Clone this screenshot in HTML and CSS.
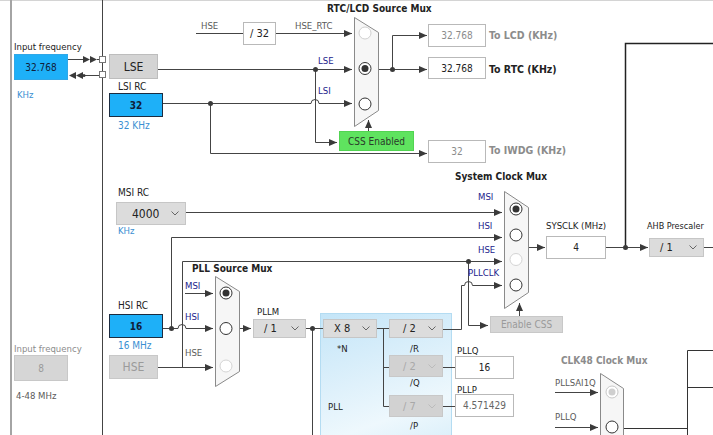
FILE: index.html
```html
<!DOCTYPE html>
<html>
<head>
<meta charset="utf-8">
<link rel="stylesheet" href="styles.css">
</head>
<body>
<div class="canvas">
<div class="pll-area"></div>
<svg class="wires" width="713" height="435" viewBox="0 0 713 435">
  <defs>
    <marker id="a" viewBox="0 0 8 8" refX="8" refY="4" markerWidth="8" markerHeight="8" markerUnits="userSpaceOnUse" orient="auto">
      <path d="M0,0.5 L8,4 L0,7.5z" fill="#3a3a3a"/>
    </marker>
  </defs>
  <line x1="0" y1="0.5" x2="713" y2="0.5" stroke="#d4d4d4"/>
  <rect x="10" y="0" width="2" height="435" fill="#a4a4a4"/>
  <g fill="none" stroke="#444" stroke-width="1">
    <path d="M102.5 0 V435"/>
    <path d="M68 59.5 H83 M97 59.5 H100"/>
    <path d="M84 75.5 H100"/>
    <path d="M158 69.5 H352" marker-end="url(#a)"/>
    <path d="M163 103.5 H311 A4 4 0 0 1 319 103.5 H352" marker-end="url(#a)"/>
    <path d="M210.5 103.5 V153.5 H427" marker-end="url(#a)"/>
    <path d="M315.5 69.5 V142.5 H337" marker-end="url(#a)"/>
    <path d="M196 33.5 H243"/>
    <path d="M276 33.5 H352" marker-end="url(#a)"/>
    <path d="M368.5 131 V120" marker-end="url(#a)"/>
    <path d="M378 69.5 H427" marker-end="url(#a)"/>
    <path d="M392.5 69.5 V35.5 H427" marker-end="url(#a)"/>
    <path d="M625.5 247.5 V43.5 H713" stroke="#222" stroke-width="1.5"/>
    <path d="M186 212.5 H502" marker-end="url(#a)"/>
    <path d="M163 328.5 H178 A4 4 0 0 1 186 328.5 H213" marker-end="url(#a)"/>
    <path d="M171.5 328.5 V237.5 H502" marker-end="url(#a)"/>
    <path d="M158 367.5 H213" marker-end="url(#a)"/>
    <path d="M182.5 367.5 V261.5 H502" marker-end="url(#a)"/>
    <path d="M468.5 261.5 V325.5 H488" marker-end="url(#a)"/>
    <path d="M443 329.5 H461.5 V285.5 H464.5 A4 4 0 0 1 472.5 285.5 H502" marker-end="url(#a)"/>
    <path d="M185 293.5 H213" marker-end="url(#a)"/>
    <path d="M239 328.5 H251" marker-end="url(#a)"/>
    <path d="M306 328.5 H323 M312.5 328.5 V435"/>
    <path d="M377 328.5 H389 M383.5 328.5 V406.5 H389 M383.5 367.5 H389"/>
    <path d="M443 367.5 H455 M443 406.5 H455"/>
    <path d="M519.5 316 V303" marker-end="url(#a)"/>
    <path d="M528 247.5 H545" marker-end="url(#a)"/>
    <path d="M606 247.5 H648" marker-end="url(#a)"/>
    <path d="M704 247.5 H713"/>
    <path d="M555 392.5 H598" marker-end="url(#a)"/>
    <path d="M555 427.5 H598" marker-end="url(#a)"/>
    <path d="M623 428.5 H687.5 M687.5 435 V350.5 H713 M687.5 387.5 H713" stroke="#333"/>
  </g>
  <g fill="#3a3a3a">
    <polygon points="83,56 90,59.5 83,63"/>
    <polygon points="90,56 97,59.5 90,63"/>
    <polygon points="83,72 76,75.5 83,79"/>
    <polygon points="76,72 69,75.5 76,79"/>
    <circle cx="84" cy="75.5" r="1.5"/>
    <circle cx="315.5" cy="69.5" r="2.5"/>
    <circle cx="210.5" cy="103.5" r="2.5"/>
    <circle cx="392.5" cy="69.5" r="2.5"/>
    <circle cx="625.5" cy="247.5" r="2.5"/>
    <circle cx="171.5" cy="328.5" r="2.5"/>
    <circle cx="468.5" cy="261.5" r="2.5"/>
    <circle cx="312.5" cy="328.5" r="2.5"/>
  </g>
  <g fill="#fff" stroke="#777">
    <rect x="99.5" y="56.5" width="6" height="6"/>
    <rect x="99.5" y="71.5" width="6" height="6"/>
  </g>
  <g fill="#f6f6f6" stroke="#8a8a8a">
    <polygon points="354.5,17.5 378.5,32.5 378.5,110.5 354.5,126.5"/>
    <polygon points="504.5,191.5 528.5,207.5 528.5,292.5 504.5,308.5"/>
    <polygon points="215.5,276.5 239.5,291.5 239.5,371.5 215.5,386.5"/>
    <polygon points="600.5,373.5 623.5,388.5 623.5,460 600.5,470"/>
  </g>
  <g fill="#fff" stroke="#333" stroke-width="1">
    <circle cx="365" cy="33" r="6" stroke="#d0d0d0"/>
    <circle cx="365" cy="68.5" r="6"/>
    <circle cx="365" cy="104" r="6"/>
    <circle cx="516" cy="209" r="6"/>
    <circle cx="516" cy="235" r="6"/>
    <circle cx="516" cy="259.5" r="6" stroke="#d4d4d4"/>
    <circle cx="516" cy="285" r="6"/>
    <circle cx="226" cy="293" r="6"/>
    <circle cx="226" cy="328.5" r="6"/>
    <circle cx="226" cy="366" r="6" stroke="#d4d4d4"/>
    <circle cx="612" cy="392" r="6" stroke="#c8c8c8"/>
    <circle cx="612" cy="427" r="6"/>
  </g>
  <g fill="#333">
    <circle cx="365" cy="68.5" r="3.5"/>
    <circle cx="516" cy="209" r="3.5"/>
    <circle cx="226" cy="293" r="3.5"/>
    <circle cx="612" cy="392" r="3.5" fill="#cfcfcf"/>
  </g>
</svg>

<div class="node blue inbox b-in1">32.768</div>
<div class="node gray big b-lse">LSE</div>
<div class="node blue dark b-lsi">32</div>
<div class="node white b-div32">/ 32</div>
<div class="node white fade b-lcd">32.768</div>
<div class="node white b-rtc">32.768</div>
<div class="node white fade b-iwdg">32</div>
<div class="node green b-css">CSS Enabled</div>
<div class="node drop b-msi"><span>4000</span><svg class="chev" width="8" height="5" viewBox="0 0 8 5"><path d="M0.5 0.5 L4 4 L7.5 0.5" fill="none" stroke="#666"/></svg></div>
<div class="node blue dark b-hsi">16</div>
<div class="node gray big fade2 b-hse">HSE</div>
<div class="node gray fade2 b-in2">8</div>
<div class="node drop b-pllm"><span>/ 1</span><svg class="chev" width="8" height="5" viewBox="0 0 8 5"><path d="M0.5 0.5 L4 4 L7.5 0.5" fill="none" stroke="#666"/></svg></div>
<div class="node drop b-x8"><span>X 8</span><svg class="chev" width="8" height="5" viewBox="0 0 8 5"><path d="M0.5 0.5 L4 4 L7.5 0.5" fill="none" stroke="#666"/></svg></div>
<div class="node drop b-r"><span>/ 2</span><svg class="chev" width="8" height="5" viewBox="0 0 8 5"><path d="M0.5 0.5 L4 4 L7.5 0.5" fill="none" stroke="#666"/></svg></div>
<div class="node drop off b-q"><span>/ 2</span><svg class="chev" width="8" height="5" viewBox="0 0 8 5"><path d="M0.5 0.5 L4 4 L7.5 0.5" fill="none" stroke="#bbb"/></svg></div>
<div class="node drop off b-p"><span>/ 7</span><svg class="chev" width="8" height="5" viewBox="0 0 8 5"><path d="M0.5 0.5 L4 4 L7.5 0.5" fill="none" stroke="#bbb"/></svg></div>
<div class="node white b-pllq">16</div>
<div class="node white mid b-pllp">4.571429</div>
<div class="node gray fade2 b-ecss">Enable CSS</div>
<div class="node white b-sysclk">4</div>
<div class="node drop b-ahb"><span>/ 1</span><svg class="chev" width="8" height="5" viewBox="0 0 8 5"><path d="M0.5 0.5 L4 4 L7.5 0.5" fill="none" stroke="#666"/></svg></div>

<div class="lbl l-inf1">Input frequency</div>
<div class="lbl blue-t l-khz1">KHz</div>
<div class="lbl l-lsirc">LSI RC</div>
<div class="lbl blue-t l-k32">32 KHz</div>
<div class="lbl grey-t l-hse">HSE</div>
<div class="lbl grey-t l-hsertc">HSE_RTC</div>
<div class="lbl title l-rtc">RTC/LCD Source Mux</div>
<div class="lbl navy l-lse">LSE</div>
<div class="lbl navy l-lsi">LSI</div>
<div class="lbl out fade l-tolcd">To LCD (KHz)</div>
<div class="lbl out l-tortc">To RTC (KHz)</div>
<div class="lbl out fade l-toiwdg">To IWDG (KHz)</div>
<div class="lbl l-msirc">MSI RC</div>
<div class="lbl blue-t l-khz2">KHz</div>
<div class="lbl title l-sys">System Clock Mux</div>
<div class="lbl navy l-smsi">MSI</div>
<div class="lbl navy l-shsi">HSI</div>
<div class="lbl navy l-shse">HSE</div>
<div class="lbl navy l-spll">PLLCLK</div>
<div class="lbl l-sysclk">SYSCLK (MHz)</div>
<div class="lbl l-ahb">AHB Prescaler</div>
<div class="lbl title l-pll">PLL Source Mux</div>
<div class="lbl navy l-pmsi">MSI</div>
<div class="lbl navy l-phsi">HSI</div>
<div class="lbl grey-t l-phse">HSE</div>
<div class="lbl l-hsirc">HSI RC</div>
<div class="lbl blue-t l-m16">16 MHz</div>
<div class="lbl fade l-inf2">Input frequency</div>
<div class="lbl grey-t l-range">4-48 MHz</div>
<div class="lbl l-pllm">PLLM</div>
<div class="lbl l-n">*N</div>
<div class="lbl l-r">/R</div>
<div class="lbl l-q">/Q</div>
<div class="lbl l-p">/P</div>
<div class="lbl l-pllbox">PLL</div>
<div class="lbl l-pllq">PLLQ</div>
<div class="lbl l-pllp">PLLP</div>
<div class="lbl title fade l-clk48">CLK48 Clock Mux</div>
<div class="lbl grey-t l-csai">PLLSAI1Q</div>
<div class="lbl grey-t l-cq">PLLQ</div>
</div>
</body>
</html>
```

FILE: styles.css
```css
body {
  margin: 0;
  background: #fff;
  font-family: "DejaVu Sans Condensed", "DejaVu Sans", "Liberation Sans", sans-serif;
  font-stretch: condensed;
}

.canvas {
  position: relative;
  width: 713px;
  height: 435px;
  overflow: hidden;
  background: #fff;
}

.wires {
  position: absolute;
  left: 0;
  top: 0;
}

/* PLL block background (a region of the diagram canvas) */
.pll-area {
  position: absolute;
  left: 320px;
  top: 313px;
  width: 132px;
  height: 140px;
  box-sizing: border-box;
  border: 1px solid #b4dcf2;
  background: linear-gradient(160deg, #c4e5f8 0%, #dff1fb 45%, #eef8fd 70%, #d6edf9 100%);
}

/* ---------- boxes ---------- */
.node {
  position: absolute;
  box-sizing: border-box;
  display: flex;
  align-items: center;
  justify-content: center;
  font-size: 10px;
  color: #222;
  white-space: nowrap;
}

.blue {
  background: #1eb0f8;
  color: #10203a;
}

.inbox {
  border: 1px solid #30a8e8;
}

.dark {
  border: 1px solid #1d2c40;
  font-weight: bold;
}

.gray {
  background: #d4d4d4;
  border: 1px solid #bdbdbd;
}

.big {
  font-size: 12px;
}

.fade2 {
  color: #9a9a9a;
  background: #d6d6d6;
  border-color: #c8c8c8;
}

.white {
  background: #fff;
  border: 1px solid #b9b9b9;
}

.mid {
  color: #666;
}

.green {
  background: #5fe35f;
  border: 1px solid #52d452;
  color: #2a3a2a;
}

.drop {
  background: #dcdcdc;
  border: 1px solid #c6c6c6;
  justify-content: space-between;
  font-size: 11px;
  padding: 0 6px 0 10px;
}

.drop.off {
  background: #d2d2d2;
  color: #a8a8a8;
  border-color: #c8c8c8;
}

.chev {
  display: block;
}

.b-in1 { left: 14px; top: 54px; width: 54px; height: 26px; }
.b-lse { left: 109px; top: 54px; width: 49px; height: 25px; }
.b-lsi { left: 109px; top: 93px; width: 54px; height: 24px; }
.b-div32 { left: 243px; top: 22px; width: 33px; height: 23px; font-size: 11px; }
.b-lcd { left: 428px; top: 24px; width: 58px; height: 23px; }
.b-rtc { left: 428px; top: 57px; width: 58px; height: 22px; }
.b-iwdg { left: 428px; top: 140px; width: 58px; height: 23px; }
.b-css { left: 339px; top: 131px; width: 75px; height: 20px; }
.b-msi { left: 116px; top: 202px; width: 70px; height: 23px; padding-left: 15px; font-size: 12px; }
.b-hsi { left: 109px; top: 314px; width: 54px; height: 24px; }
.b-hse { left: 109px; top: 355px; width: 49px; height: 24px; }
.b-in2 { left: 14px; top: 355px; width: 54px; height: 26px; }
.b-pllm { left: 253px; top: 319px; width: 53px; height: 19px; }
.b-x8 { left: 323px; top: 319px; width: 54px; height: 19px; }
.b-r { left: 389px; top: 319px; width: 54px; height: 19px; padding-left: 13px; }
.b-q { left: 389px; top: 355px; width: 54px; height: 22px; padding-left: 13px; }
.b-p { left: 389px; top: 395px; width: 54px; height: 22px; padding-left: 13px; }
.b-pllq { left: 455px; top: 356px; width: 59px; height: 23px; }
.b-pllp { left: 455px; top: 394px; width: 59px; height: 23px; }
.b-ecss { left: 490px; top: 316px; width: 73px; height: 17px; }
.b-sysclk { left: 546px; top: 236px; width: 60px; height: 23px; }
.b-ahb { left: 649px; top: 238px; width: 55px; height: 19px; }

/* ---------- labels ---------- */
.lbl {
  position: absolute;
  font-size: 9.5px;
  line-height: 12px;
  white-space: nowrap;
  color: #222;
}

.blue-t { color: #3a8fd2; }
.grey-t { color: #5a5a5a; }
.navy { color: #22228c; }
.fade { color: #8c8c8c; }

.title {
  font-weight: bold;
  font-size: 10px;
}

.out {
  font-weight: bold;
  font-size: 10.5px;
}

.l-inf1 { left: 14px; top: 41px; }
.l-khz1 { left: 17px; top: 89px; }
.l-lsirc { left: 118px; top: 81px; font-size: 10px; }
.l-k32 { left: 118px; top: 120px; font-size: 10px; }
.l-hse { left: 201px; top: 20px; }
.l-hsertc { left: 295px; top: 20px; }
.l-rtc { left: 327px; top: 3px; }
.l-lse { left: 318px; top: 55px; }
.l-lsi { left: 318px; top: 85px; }
.l-tolcd { left: 489px; top: 29px; }
.l-tortc { left: 489px; top: 63px; }
.l-toiwdg { left: 489px; top: 144px; }
.l-msirc { left: 118px; top: 187px; font-size: 10px; }
.l-khz2 { left: 118px; top: 225px; }
.l-sys { left: 455px; top: 171px; }
.l-smsi { left: 478px; top: 191px; }
.l-shsi { left: 478px; top: 220px; }
.l-shse { left: 478px; top: 244px; }
.l-spll { left: 468px; top: 267px; }
.l-sysclk { left: 546px; top: 220px; }
.l-ahb { left: 647px; top: 220px; font-size: 9px; }
.l-pll { left: 192px; top: 263px; }
.l-pmsi { left: 185px; top: 280px; }
.l-phsi { left: 185px; top: 311px; }
.l-phse { left: 185px; top: 347px; }
.l-hsirc { left: 118px; top: 300px; font-size: 10px; }
.l-m16 { left: 118px; top: 340px; font-size: 10px; }
.l-inf2 { left: 14px; top: 343px; }
.l-range { left: 16px; top: 390px; }
.l-pllm { left: 257px; top: 306px; }
.l-n { left: 337px; top: 343px; }
.l-r { left: 410px; top: 343px; }
.l-q { left: 410px; top: 377px; }
.l-p { left: 410px; top: 420px; }
.l-pllbox { left: 328px; top: 401px; }
.l-pllq { left: 457px; top: 345px; }
.l-pllp { left: 457px; top: 384px; }
.l-clk48 { left: 561px; top: 355px; }
.l-csai { left: 555px; top: 377px; }
.l-cq { left: 555px; top: 411px; }
```
